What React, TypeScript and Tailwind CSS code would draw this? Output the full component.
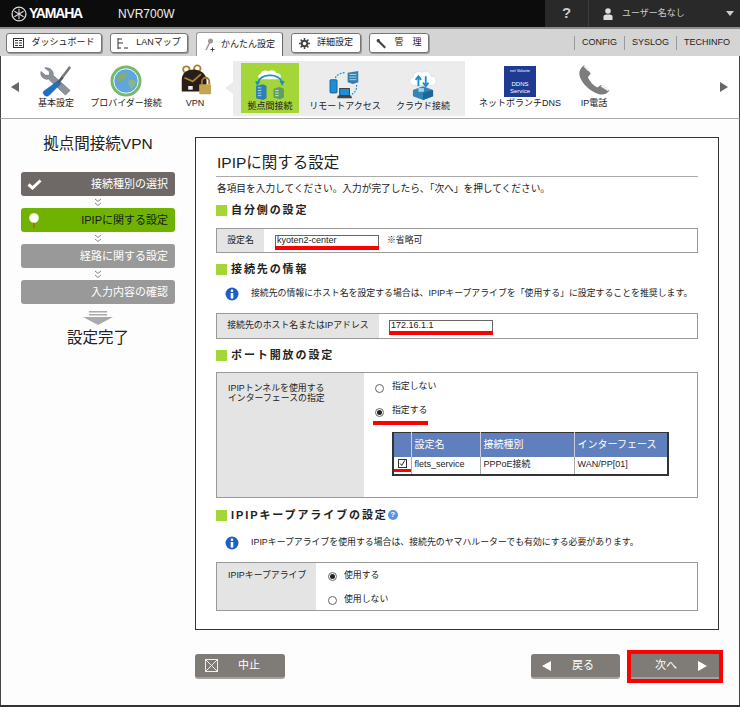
import type { ReactNode } from "react"

const font = { fontFamily: '"Liberation Sans", "Noto Sans CJK JP", sans-serif' }

function TabButton({ icon, label, width }: { icon: ReactNode; label: string; width: string }) {
  return (
    <div className={`${width} flex h-[20px] items-center justify-center gap-[7px] rounded-[3px] border border-[#777] bg-white text-[9px] text-[#222] shadow-[1px_1px_0_#999]`}>
      {icon}
      <span>{label}</span>
    </div>
  )
}

function WrenchIcon() {
  return (
    <svg width="32" height="32" viewBox="0 0 34 34">
      <path d="M5 3l5 4 0 4-4 0-5-4c-1 5 3 9 8 8l18 17 5-5L14 11C15 6 10 2 5 3z" fill="#8d9299" stroke="#5e646b" strokeWidth="0.6" />
      <path d="M31 1l2 2-9 12-2-2z" fill="#777" />
      <path d="M23 12l2 2-5 6-2-2z" fill="#555" />
      <path d="M19 17l3 3-12 12c-2 2-5 1-6-1-1-1-1-3 1-4z" fill="#1f6fc4" stroke="#124f91" strokeWidth="0.5" />
    </svg>
  )
}

function GlobeIcon() {
  return (
    <svg width="32" height="32" viewBox="0 0 34 34">
      <circle cx="17" cy="17" r="15" fill="#5fa6dc" stroke="#77bb66" strokeWidth="3" />
      <circle cx="17" cy="17" r="13" fill="none" stroke="#fff" strokeWidth="1" />
      <path d="M8 12c3-4 7-5 10-3 1 2-2 3-2 5s-3 2-4 5c-2 0-5-4-4-7z" fill="#7fae78" />
      <path d="M20 16c3-1 7 0 8 2-1 4-4 7-6 8-1-3-3-6-2-10z" fill="#8bb685" />
    </svg>
  )
}

function VpnIcon() {
  return (
    <svg width="33" height="33" viewBox="0 0 36 36">
      <circle cx="8" cy="6" r="3.500" fill="none" stroke="#a8832f" strokeWidth="2" />
      <circle cx="20" cy="5" r="3.500" fill="none" stroke="#a8832f" strokeWidth="2" />
      <path d="M3 30V17C3 9 10 6 16 6s14 4 14 12v12z" fill="#2a1c18" />
      <path d="M6 15l9 4 9-8" fill="none" stroke="#a8832f" strokeWidth="2" />
      <rect x="10" y="24" width="5" height="4" fill="#eee" />
      <path d="M25 22v-3a4 4 0 0 1 8 0v3" fill="none" stroke="#9a7a32" strokeWidth="2" />
      <rect x="22" y="22" width="13" height="11" rx="1" fill="#c5a34f" />
    </svg>
  )
}

function BaseIcon() {
  return (
    <svg width="36" height="33" viewBox="0 0 36 38">
      <path d="M8 14c-4 0-5-5-1-6 1-4 6-5 9-3 3-2 8-2 9 2 5-1 8 5 3 7z" fill="#fff" />
      <path d="M4 18C7 8 26 6 32 17" fill="none" stroke="#1b8ed0" strokeWidth="2" />
      <path d="M1 16l6 1-4 5zM35 16l-6 0 3 6z" fill="#1b8ed0" />
      <path d="M2 22l8-2 4 2v14l-4 2-8-2z" fill="#2d7fb5" />
      <path d="M4 24h4M4 27h4M4 30h4M4 33h4" stroke="#bfe0f2" strokeWidth="1" />
      <path d="M22 25l7-2 5 2v10l-5 2-7-2z" fill="#5f9e63" />
      <path d="M24 27h4M24 30h4M24 33h4" stroke="#dff0d8" strokeWidth="1" />
    </svg>
  )
}

function RemoteIcon() {
  return (
    <svg width="32" height="30" viewBox="0 0 36 34">
      <path d="M21 3l12-2v13l-6 2-6-2z" fill="#2f7fb0" />
      <path d="M23 5h8M23 8h8M23 11h8" stroke="#bfe0f2" strokeWidth="1" />
      <rect x="1" y="11" width="8" height="15" rx="1" fill="#1c8fd6" stroke="#145f8f" />
      <path d="M7 9c2-4 7-6 12-6" fill="none" stroke="#1b8ed0" strokeWidth="1.400" strokeDasharray="2 1.500" />
      <path d="M31 17c1 5-2 9-6 11" fill="none" stroke="#1b8ed0" strokeWidth="1.400" strokeDasharray="2 1.500" />
      <rect x="12" y="21" width="11" height="8" fill="#1c8fd6" stroke="#333" />
      <path d="M10 29h15l1 3H9z" fill="#444" />
    </svg>
  )
}

function CloudIcon() {
  return (
    <svg width="30" height="33" viewBox="0 0 32 36">
      <path d="M7 20c-6 0-8-7-2-9 0-5 6-8 10-5 4-3 9-1 10 4 6 0 8 9 1 10z" fill="#fff" stroke="#e0e0e0" />
      <path d="M11 21V11M8 14l3-4 3 4" fill="none" stroke="#1b8ed0" strokeWidth="2" />
      <path d="M19 10v10M16 17l3 4 3-4" fill="none" stroke="#1b8ed0" strokeWidth="2" />
      <path d="M5 25l11-4 11 4v7l-11 4-11-4z" fill="#2f86b8" />
      <path d="M16 28l11-3v7l-11 4z" fill="#1b6796" />
      <rect x="11" y="23" width="6" height="4" fill="#a9d3ea" />
    </svg>
  )
}

function PhoneIcon() {
  return (
    <svg width="33" height="32" viewBox="0 0 34 34">
      <path d="M6 0C1 4-1 9 3 16c4 7 11 13 19 15 4 1 8 0 11-4l-9-6-4 3c-4-2-8-6-10-11l3-4z" fill="#7d7d7d" />
      <path d="M6 1l5 5M24 22l8 5" stroke="#eee" strokeWidth="2" />
    </svg>
  )
}

function NavItem({ icon, label, width, outer }: { icon: ReactNode; label: string; width: string; outer?: boolean }) {
  return (
    <div className={`${width} ${outer ? "-mt-[4px]" : ""} flex h-[50px] shrink-0 flex-col items-center justify-end`}>
      <div className="flex h-[36px] items-end">{icon}</div>
      <div className="whitespace-nowrap text-[9px] leading-[13px] text-[#222]">{label}</div>
    </div>
  )
}

function Step({ label, tone }: { label: string; tone: "done" | "current" | "todo" }) {
  const bg = tone === "done" ? "bg-[#6e6966] text-white" : tone === "current" ? "bg-[#6fb200] text-[#1a1a1a]" : "bg-[#999] text-white"
  return (
    <div className={`${bg} flex h-[24px] items-center justify-between rounded-[3px] pl-[5px] pr-[7px] text-[11px]`}>
      <span className="flex w-[16px] justify-center">
        {tone === "done" && (
          <svg width="15" height="11" viewBox="0 0 15 11">
            <path d="M1.500 5.500l4 3.500 8-7.500" fill="none" stroke="#fff" strokeWidth="3" />
          </svg>
        )}
        {tone === "current" && (
          <svg width="10" height="15" viewBox="0 0 10 15">
            <path d="M5 8v7" stroke="#c0562a" strokeWidth="1.500" />
            <circle cx="5" cy="5" r="4.800" fill="#fff" />
          </svg>
        )}
      </span>
      <span>{label}</span>
    </div>
  )
}

function Chevrons() {
  return (
    <div className="flex h-[12px] items-center justify-center">
      <svg width="8" height="9" viewBox="0 0 8 9">
        <path d="M1 1l3 2.500L7 1M1 5l3 2.500L7 5" fill="none" stroke="#888" strokeWidth="1" />
      </svg>
    </div>
  )
}

function SectionTitle({ children }: { children: ReactNode }) {
  return (
    <div className="flex h-[12px] items-center text-[11px] font-bold tracking-[1.900px] text-[#222]">
      <span className="mr-[4px] h-[11px] w-[11px] bg-[#a4d637]" />
      {children}
    </div>
  )
}

function InfoLine({ children, className }: { children: ReactNode; className: string }) {
  return (
    <div className={`${className} flex h-[14px] items-center whitespace-nowrap pl-[9px] text-[8.900px] text-[#222]`}>
      <svg width="14" height="14" viewBox="0 0 14 14" className="mr-[12px] shrink-0">
        <circle cx="7" cy="7" r="6.500" fill="#1d5fc4" />
        <circle cx="7" cy="3.700" r="1.300" fill="#fff" />
        <rect x="5.700" y="6" width="2.600" height="5.500" fill="#fff" />
      </svg>
      {children}
    </div>
  )
}

function Radio({ checked }: { checked?: boolean }) {
  return (
    <span className="flex h-[9px] w-[9px] shrink-0 items-center justify-center rounded-full border border-[#666] bg-white">
      {checked && <span className="h-[5px] w-[5px] rounded-full bg-[#222]" />}
    </span>
  )
}

function TextField({ value, width }: { value: string; width: string }) {
  return (
    <div className={`${width} border-b-[4px] border-[#f00]`}>
      <input
        readOnly
        value={value}
        className="block h-[11px] w-full border border-b-0 border-[#666] bg-white px-[1px] text-[9px] font-normal leading-[11px] text-[#222] outline-none"
        style={font}
      />
    </div>
  )
}

function FootButton({ children, width, className = "" }: { children: ReactNode; width: string; className?: string }) {
  return (
    <div className={`${width} ${className} flex h-[25px] shrink-0 items-center rounded-[3px] border-b-2 border-[#a5a29e] bg-[#7f7b76] text-[11px] text-white`}>
      {children}
    </div>
  )
}

export default function App() {
  return (
    <div className="flex h-[707px] w-[740px] flex-col overflow-hidden border-b-2 border-[#333] bg-[#fdfdfd]" style={font}>
      {/* ヘッダー */}
      <div className="flex h-[27px] shrink-0 items-center bg-[#0c0c0c] text-white">
        <div className="ml-[11px] flex w-[107px] items-center">
          <svg width="16" height="16" viewBox="0 0 15 15" className="mr-[2px]">
            <circle cx="7.500" cy="7.500" r="6.500" fill="none" stroke="#ddd" strokeWidth="1.200" />
            <path d="M7.500 2.500v10M3.200 5l8.600 5M3.200 10l8.600-5" stroke="#ddd" strokeWidth="1" />
          </svg>
          <span className="text-[14px] font-bold tracking-[-1.200px]">YAMAHA</span>
        </div>
        <span className="text-[12px] text-[#eee]">NVR700W</span>
        <div className="ml-auto flex h-full w-[195px] bg-[#292929] text-[#ccc]">
          <div className="flex w-[44px] items-center justify-center border-r border-[#3c3c3c] text-[15px] font-bold">?</div>
          <div className="flex flex-1 items-center pl-[14px] text-[9px]">
            <svg width="10" height="12" viewBox="0 0 10 12" className="mr-[9px]">
              <circle cx="5" cy="3" r="2.800" fill="#ddd" />
              <path d="M0.500 12V8.500C0.500 7 2 6.500 5 6.500S9.500 7 9.500 8.500V12z" fill="#ddd" />
            </svg>
            <span>ユーザー名なし</span>
            <span className="ml-auto mr-[6px] h-0 w-0 border-x-[4px] border-t-[5px] border-x-transparent border-t-[#ccc]" />
          </div>
        </div>
      </div>

      {/* タブ */}
      <div className="flex h-[29px] shrink-0 items-end gap-[8px] border-t-2 border-[#8b8b8b] bg-[#d4d4d4] pb-[3px] pl-[6px]">
        <TabButton
          width="w-[96px]"
          label="ダッシュボード"
          icon={
            <svg width="11" height="10" viewBox="0 0 11 10">
              <rect x="0.500" y="0.500" width="10" height="9" fill="none" stroke="#333" />
              <path d="M2 2.500h3M6 2.500h3M2 5h3M6 5h3M2 7.500h3M6 7.500h3" stroke="#333" />
            </svg>
          }
        />
        <TabButton
          width="w-[78px]"
          label="LANマップ"
          icon={
            <svg width="12" height="13" viewBox="0 0 12 13">
              <path d="M1 1v11M1 2h4M1 6h5M1 11h3M7 11h4" stroke="#333" fill="none" />
            </svg>
          }
        />
        <div className="-mb-[3px] flex h-[24px] w-[87px] items-center justify-center gap-[5px] rounded-t-[3px] border border-b-0 border-[#999] border-r-[#666] bg-white text-[9px] text-[#222]">
          <svg width="12" height="14" viewBox="0 0 12 14">
            <circle cx="6.500" cy="3" r="2.500" fill="#999" />
            <path d="M5.500 5L2 12" stroke="#999" strokeWidth="1.500" />
            <path d="M8.500 9.500v4M6.500 11.500h4" stroke="#444" />
          </svg>
          <span>かんたん設定</span>
        </div>
        <TabButton
          width="w-[70px]"
          label="詳細設定"
          icon={
            <svg width="11" height="11" viewBox="0 0 11 11">
              <circle cx="5.500" cy="5.500" r="2.800" fill="none" stroke="#444" strokeWidth="2" />
              <path d="M5.500 0v2M5.500 9v2M0 5.500h2M9 5.500h2M1.600 1.600l1.400 1.400M8 8l1.400 1.400M1.600 9.400L3 8M8 3l1.400-1.400" stroke="#444" strokeWidth="1.500" />
            </svg>
          }
        />
        <TabButton
          width="w-[60px]"
          label="管　理"
          icon={
            <svg width="11" height="11" viewBox="0 0 11 11">
              <path d="M1 1.500C2.500 0.500 4 1 4 3l6 6-1.500 1.500-6-6C1 4.500 0 3 1 1.500z" fill="#444" />
            </svg>
          }
        />
        <div className="ml-auto mr-[10px] flex h-[20px] items-center text-[9px] text-[#222]">
          <span className="border-l border-[#999] pl-[7px] pr-[7px]">CONFIG</span>
          <span className="border-l border-[#999] pl-[7px] pr-[7px]">SYSLOG</span>
          <span className="border-l border-[#999] pl-[7px]">TECHINFO</span>
        </div>
      </div>

      {/* アイコンメニュー */}
      <div className="flex h-[63px] shrink-0 items-center border-x border-b border-[#444] border-b-[#aaa] bg-white">
        <span className="ml-[10px] mr-[2px] h-0 w-0 border-y-[5px] border-r-[8px] border-y-transparent border-r-[#666]" />
        <NavItem outer width="w-[70px]" icon={<WrenchIcon />} label="基本設定" />
        <NavItem outer width="w-[70px]" icon={<GlobeIcon />} label="プロバイダー接続" />
        <NavItem outer width="w-[68px]" icon={<VpnIcon />} label="VPN" />
        <div className="relative ml-[4px] mt-[2px] flex h-[55px] w-[232px] shrink-0 items-center bg-[#ececec] pl-[8px]">
          <span className="absolute -left-[8px] top-[21px] h-0 w-0 border-y-[6px] border-r-[8px] border-y-transparent border-r-[#ececec]" />
          <div className="flex h-[50px] w-[58px] justify-center bg-[#a4d637]">
            <NavItem width="w-[58px]" icon={<BaseIcon />} label="拠点間接続" />
          </div>
          <NavItem width="w-[92px]" icon={<RemoteIcon />} label="リモートアクセス" />
          <NavItem width="w-[64px]" icon={<CloudIcon />} label="クラウド接続" />
        </div>
        <NavItem
          outer
          width="w-[110px]"
          label="ネットボランチDNS"
          icon={
            <div className="flex h-[31px] w-[32px] flex-col items-center justify-between bg-[#1f3a93] pb-[2px] pt-[2px] text-[6px] leading-[7px] text-white">
              <span className="text-[4px] leading-[5px]">net Volante</span>
              <span className="flex flex-col items-center">
                <span>DDNS</span>
                <span>Service</span>
              </span>
            </div>
          }
        />
        <NavItem outer width="w-[38px]" icon={<PhoneIcon />} label="IP電話" />
        <span className="ml-[107px] h-0 w-0 border-y-[5px] border-l-[8px] border-y-transparent border-l-[#666]" />
      </div>

      {/* 本体 */}
      <div className="flex min-h-0 flex-1 border-x border-[#444]">
        <div className="w-[194px] shrink-0 pl-[20px] pr-[20px]">
          <div className="mt-[14px] h-[24px] text-center text-[15.500px] leading-[22px] text-[#222]">拠点間接続VPN</div>
          <div className="mt-[15px]">
            <Step tone="done" label="接続種別の選択" />
            <Chevrons />
            <Step tone="current" label="IPIPに関する設定" />
            <Chevrons />
            <Step tone="todo" label="経路に関する設定" />
            <Chevrons />
            <Step tone="todo" label="入力内容の確認" />
          </div>
          <div className="mt-[7px] flex justify-center">
            <svg width="30" height="14" viewBox="0 0 30 14">
              <path d="M6 0h18v1.500H6zM6 3h18v1.500H6z" fill="#aaa" />
              <path d="M0 6h30L15 14z" fill="#aaa" />
            </svg>
          </div>
          <div className="mt-[3px] text-center text-[15.500px] leading-[20px] text-[#222]">設定完了</div>
        </div>

        <div className="w-[524px] shrink-0">
          <div className="mt-[18px] h-[493px] border border-[#333] bg-white px-[20px]">
            <div className="mt-[14px] border-b border-[#aaa] pb-[2px] pl-[1px] text-[15.500px] leading-[22px] text-[#222]">IPIPに関する設定</div>
            <div className="mt-[6px] pl-[1px] text-[9.700px] leading-[12px] text-[#222]">各項目を入力してください。入力が完了したら、「次へ」を押してください。</div>

            <div className="mt-[9px]">
              <SectionTitle>自分側の設定</SectionTitle>
            </div>
            <div className="mt-[12px] flex h-[25px] items-center border border-[#999] text-[8.900px] text-[#222]">
              <div className="flex h-full w-[47px] items-center justify-center bg-[#e4e4e4]">設定名</div>
              <div className="ml-[11px] mt-[3px]">
                <TextField value="kyoten2-center" width="w-[104px]" />
              </div>
              <span className="ml-[8px]">※省略可</span>
            </div>

            <div className="mt-[10px]">
              <SectionTitle>接続先の情報</SectionTitle>
            </div>
            <InfoLine className="mt-[12px]">接続先の情報にホスト名を設定する場合は、IPIPキープアライブを「使用する」に設定することを推奨します。</InfoLine>
            <div className="mt-[12px] flex h-[26px] items-center border border-[#999] text-[8.900px] text-[#222]">
              <div className="flex h-full w-[162px] items-center justify-center bg-[#e4e4e4]">接続先のホスト名またはIPアドレス</div>
              <div className="ml-[10px] mt-[2px]">
                <TextField value="172.16.1.1" width="w-[104px]" />
              </div>
            </div>

            <div className="mt-[10px]">
              <SectionTitle>ポート開放の設定</SectionTitle>
            </div>
            <div className="mt-[11px] flex h-[126px] border border-[#999] text-[8.900px] text-[#222]">
              <div className="w-[147px] bg-[#e4e4e4] pl-[11px] pt-[10px] leading-[10px]">
                IPIPトンネルを使用する
                <br />
                インターフェースの指定
              </div>
              <div className="pl-[9px] pt-[9px]">
                <div className="flex h-[12px] items-center gap-[8px] pl-[2px]">
                  <Radio />
                  <span className="-mt-[3px]">指定しない</span>
                </div>
                <div className="mt-[12px] w-[55px] border-b-[4px] border-[#f00] pb-[2px]">
                  <div className="flex h-[13px] items-center gap-[8px] pl-[2px]">
                    <Radio checked />
                    <span className="-mt-[3px] whitespace-nowrap">指定する</span>
                  </div>
                </div>
                <table className="ml-[19px] mt-[7px] w-[277px] table-fixed border-collapse border-2 border-t-[1px] border-[#333] text-[9px]">
                  <colgroup>
                    <col className="w-[18px]" />
                    <col className="w-[69px]" />
                    <col className="w-[94px]" />
                    <col />
                  </colgroup>
                  <thead>
                    <tr className="h-[24px] bg-[#5f7fbd] text-left text-[10px] text-white">
                      <th className="border-r border-[#ccd]" />
                      <th className="border-r border-[#ccd] pl-[3px] font-normal">設定名</th>
                      <th className="border-r border-[#ccd] pl-[3px] font-normal">接続種別</th>
                      <th className="pl-[3px] font-normal">インターフェース</th>
                    </tr>
                  </thead>
                  <tbody>
                    <tr className="h-[18px] bg-white">
                      <td className="border-r border-[#aaa] p-0">
                        <div className="border-b-[3px] border-[#f00] pb-[1px] pl-[4px] pt-[1px]">
                          <div className="flex h-[9px] w-[9px] items-center justify-center border border-[#333]">
                            <svg width="9" height="9" viewBox="0 0 9 9">
                              <path d="M1.500 4.500l2 2.500 4-6.500" fill="none" stroke="#111" strokeWidth="1.200" />
                            </svg>
                          </div>
                        </div>
                      </td>
                      <td className="border-r border-[#aaa] pl-[3px]">flets_service</td>
                      <td className="border-r border-[#aaa] pl-[3px]">PPPoE接続</td>
                      <td className="pl-[3px]">WAN/PP[01]</td>
                    </tr>
                  </tbody>
                </table>
              </div>
            </div>

            <div className="mt-[11px] flex items-center">
              <SectionTitle>IPIPキープアライブの設定</SectionTitle>
              <span className="flex h-[10px] w-[10px] items-center justify-center rounded-full bg-[#5b93e6] text-[8px] font-bold leading-none text-white">?</span>
            </div>
            <InfoLine className="mt-[15px]">IPIPキープアライブを使用する場合は、接続先のヤマハルーターでも有効にする必要があります。</InfoLine>
            <div className="mt-[12px] flex h-[49px] border border-[#999] text-[8.900px] text-[#222]">
              <div className="w-[99px] bg-[#e4e4e4] pl-[11px] pt-[6px] leading-[12px]">IPIPキープアライブ</div>
              <div className="pl-[12px] pt-[7px]">
                <div className="flex h-[12px] items-center gap-[7px]">
                  <Radio checked />
                  <span>使用する</span>
                </div>
                <div className="mt-[12px] flex h-[12px] items-center gap-[7px]">
                  <Radio />
                  <span>使用しない</span>
                </div>
              </div>
            </div>
          </div>

          <div className="mt-[24px] flex items-start">
            <FootButton width="w-[90px]" className="pl-[10px]">
              <svg width="13" height="13" viewBox="0 0 13 13" className="mr-[20px]">
                <rect x="0.500" y="0.500" width="12" height="12" fill="none" stroke="#eee" />
                <path d="M1 1l11 11M12 1L1 12" stroke="#eee" />
              </svg>
              <span>中止</span>
            </FootButton>
            <FootButton width="w-[89px]" className="ml-[246px] pl-[11px]">
              <span className="mr-[21px] h-0 w-0 border-y-[5px] border-r-[9px] border-y-transparent border-r-white" />
              <span>戻る</span>
            </FootButton>
            <div className="-mt-[4px] ml-[7px] shrink-0 border-4 border-[#f00]">
              <FootButton width="w-[88px]" className="rounded-none pl-[24px]">
                <span>次へ</span>
                <span className="ml-[21px] h-0 w-0 border-y-[5px] border-l-[9px] border-y-transparent border-l-white" />
              </FootButton>
            </div>
          </div>
        </div>
      </div>
    </div>
  )
}
